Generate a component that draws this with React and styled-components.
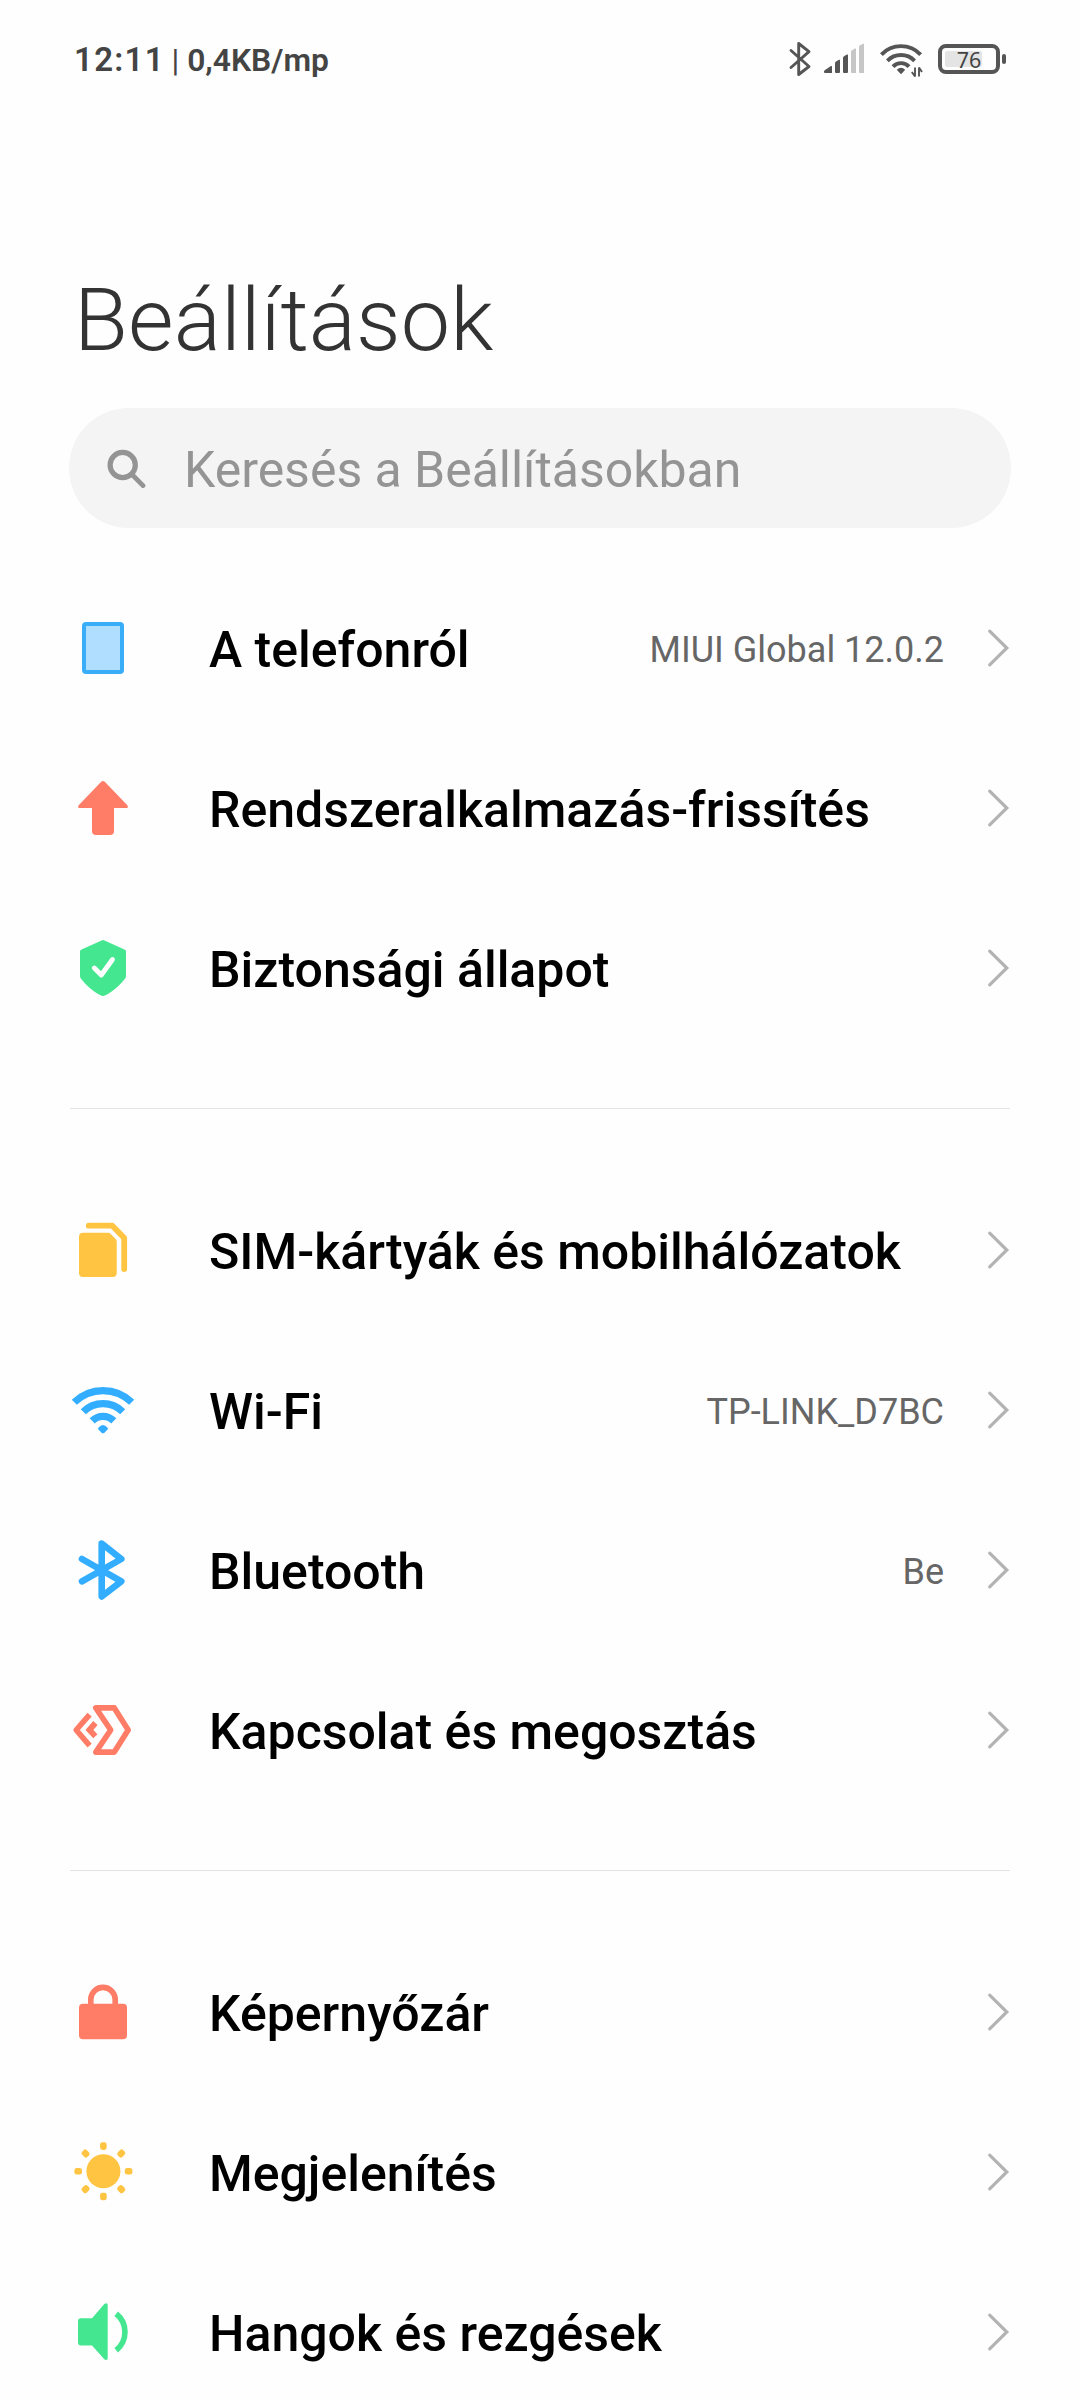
import React from "react";
import styled, { createGlobalStyle } from "styled-components";

const GlobalStyle = createGlobalStyle`
  * {
    box-sizing: border-box;
  }

  body {
    margin: 0;
    background: #fefefe;
    font-family: Roboto, "Noto Sans", sans-serif;
  }
`;

const Screen = styled.div`
  width: 1080px;
  height: 2400px;
  overflow: hidden;
  background: #fefefe;
`;

const StatusBar = styled.header`
  display: flex;
  justify-content: space-between;
  align-items: center;
  height: 118px;
  padding: 0 73px 0 74px;
`;

const StatusText = styled.div`
  display: flex;
  align-items: baseline;
  padding-top: 2px;
  color: #444;
  font-size: 31.8px;
  font-weight: 600;
  line-height: 38px;
  white-space: pre;
`;

const Clock = styled.span`
  font-size: 33px;
  letter-spacing: 1.3px;
`;

const Separator = styled.span`
  margin: 0 8px 0 6.5px;
  font-weight: 400;
`;

const StatusIcons = styled.div`
  display: flex;
  align-items: center;

  svg {
    display: block;
  }
`;

const Title = styled.h1`
  margin: 0;
  padding: 150px 0 0 74px;
  height: 290px;
  color: #333;
  font-size: 88px;
  font-weight: 300;
  line-height: 104px;
  letter-spacing: 0.1px;
`;

const SearchBar = styled.div`
  display: flex;
  align-items: center;
  width: 942px;
  height: 120px;
  margin: 0 0 40px 69px;
  padding-left: 37px;
  border-radius: 60px;
  background: #f4f4f4;
`;

const SearchText = styled.span`
  margin-left: 38px;
  padding-top: 3px;
  color: #949494;
  font-size: 50px;
  letter-spacing: -0.03px;
`;

const Group = styled.section`
  width: 940px;
  margin-left: 70px;

  & + & {
    margin-top: 60px;
    padding-top: 61px;
    border-top: 1px solid #e4e4e4;
  }
`;

const Row = styled.div`
  display: flex;
  align-items: center;
  height: 160px;
`;

const RowIcon = styled.svg`
  flex: none;
  width: 66px;
  height: 66px;
  margin-right: 73px;
`;

const Label = styled.span`
  flex: 1;
  padding-top: 3px;
  color: #000;
  font-size: 50px;
  font-weight: 500;
  white-space: nowrap;
`;

const Value = styled.span`
  margin-right: 43px;
  padding-top: 3px;
  color: #666;
  font-size: 36px;
  white-space: nowrap;
`;

const Chevron = () => (
  <svg width="23" height="40" viewBox="0 0 23 40" fill="none">
    <path d="M2.7 3.2 L19.8 20 L2.7 36.8" stroke="#b3b3b3" strokeWidth="3.2" strokeLinecap="round" />
  </svg>
);

const RED = "#ff7c66";
const BLUE = "#33adff";
const GREEN = "#45e690";
const YELLOW = "#ffc542";

const icons = {
  phone: (
    <rect x="14" y="9" width="38" height="48" rx="2" fill="#b0deff" stroke="#3aadf9" strokeWidth="4" />
  ),
  update: (
    <path
      d="M31.2 6.8 Q33 5.2 34.8 6.8 L57.3 30.2 Q59 33 56 33 H44 V56 Q44 60 40 60 H26 Q22 60 22 56 V33 H10 Q7 33 8.7 30.2 Z"
      fill={RED}
    />
  ),
  shield: (
    <>
      <path
        d="M31.5 5.6 Q33 4.6 34.5 5.6 L55 14.8 Q56 15.3 56 16.5 V41 Q56 42.5 55 43.7 C50 50 43 56.5 35.5 60.3 Q33 61.7 30.5 60.3 C23 56.5 16 50 11 43.7 Q10 42.5 10 41 V16.5 Q10 15.3 11 14.8 Z"
        fill={GREEN}
      />
      <path d="M24.3 33 L31.3 40 L42.5 24.5" fill="none" stroke="#fff" strokeWidth="4.8" strokeLinecap="round" strokeLinejoin="round" />
    </>
  ),
  sim: (
    <>
      <path d="M13 15.7 H38 Q39.5 15.7 40.5 16.7 L45.7 22 Q46.7 23 46.7 24.5 V56 Q46.7 60 42.7 60 H13 Q9 60 9 56 V19.7 Q9 15.7 13 15.7 Z" fill={YELLOW} />
      <path d="M18.8 8.7 H42.3 L54.2 21 V52.2" fill="none" stroke={YELLOW} strokeWidth="5.8" strokeLinecap="round" strokeLinejoin="round" />
    </>
  ),
  wifi: (
    <>
      <g fill="none" stroke={BLUE} strokeWidth="7.2">
        <path d="M4.3 25.3 A41 41 0 0 1 61.7 25.3" />
        <path d="M13.3 34.8 A28 28 0 0 1 52.7 34.8" />
        <path d="M22.2 43.9 A15.2 15.2 0 0 1 43.8 43.9" />
      </g>
      <path d="M28.4 50.8 Q33 45 37.6 50.8 Q38.4 51.6 37.6 52.6 L34.2 55.9 Q33 56.8 31.8 55.9 L28.4 52.6 Q27.6 51.6 28.4 50.8 Z" fill={BLUE} />
    </>
  ),
  bluetooth: (
    <path
      d="M12 22 L51.3 44.3 L31.7 59.5 V6.5 L51.3 22 L12 44.3"
      fill="none"
      stroke={BLUE}
      strokeWidth="6.6"
      strokeLinecap="round"
      strokeLinejoin="round"
    />
  ),
  share: (
    <g fill="none" stroke={RED} strokeWidth="5.6" strokeLinejoin="round">
      <path d="M25.8 10.9 H44.3 L58.2 33 L44.3 55.1 H25.8 L40.7 33 Z" />
      <path d="M19.6 17.6 L6.2 33 L19.6 48.6" />
      <path d="M25.4 26 L19.4 33 L25.4 39.2" strokeWidth="5.8" strokeLinejoin="miter" />
    </g>
  ),
  lock: (
    <>
      <rect x="9" y="24.8" width="48" height="35.5" rx="4" fill={RED} />
      <path d="M20.8 27 V20.6 A12.2 12.2 0 0 1 45.2 20.6 V27" fill="none" stroke={RED} strokeWidth="5.6" />
    </>
  ),
  sun: (
    <g fill={YELLOW}>
      <circle cx="33.4" cy="32.3" r="17" />
      {[0, 45, 90, 135, 180, 225, 270, 315].map((angle) => (
        <rect key={angle} x="30.1" y="3.3" width="6.6" height="7.6" rx="2.4" transform={`rotate(${angle} 33.4 32.3)`} />
      ))}
    </g>
  ),
  sound: (
    <>
      <path
        d="M11 19.3 H22 L34.3 5 Q35.2 4.2 36.2 4.2 Q37.7 4.2 37.7 6 V59.3 Q37.7 61 36.2 61 Q35.2 61 34.3 60.2 L22 46.5 H11 Q8 46.5 8 43.5 V22.3 Q8 19.3 11 19.3 Z"
        fill={GREEN}
      />
      <path d="M46.2 14.8 A23.3 23.3 0 0 1 46.2 51.2" fill="none" stroke={GREEN} strokeWidth="5.6" />
    </>
  ),
};

const groups = [
  [
    { icon: "phone", label: "A telefonról", value: "MIUI Global 12.0.2" },
    { icon: "update", label: "Rendszeralkalmazás-frissítés" },
    { icon: "shield", label: "Biztonsági állapot" },
  ],
  [
    { icon: "sim", label: "SIM-kártyák és mobilhálózatok" },
    { icon: "wifi", label: "Wi-Fi", value: "TP-LINK_D7BC" },
    { icon: "bluetooth", label: "Bluetooth", value: "Be" },
    { icon: "share", label: "Kapcsolat és megosztás" },
  ],
  [
    { icon: "lock", label: "Képernyőzár" },
    { icon: "sun", label: "Megjelenítés" },
    { icon: "sound", label: "Hangok és rezgések" },
  ],
];

const BatteryText = styled.text`
  font-family: "Noto Sans", sans-serif;
  font-size: 21.5px;
  fill: #444;
`;

function StatusGlyphs() {
  return (
    <StatusIcons>
      {/* bluetooth, signal, wifi and battery share one 40px high strip */}
      <svg width="35" height="40" viewBox="787 39 35 40" fill="none">
        <path d="M791 50.5 L809 66.5 L798.7 74.5 V43.5 L809 51.7 L791 67.5" stroke="#555" strokeWidth="2.9" strokeLinecap="round" strokeLinejoin="round" />
      </svg>
      <svg width="56" height="40" viewBox="822 39 56 40">
        <g fill="#555">
          <path d="M824 71.5 Q824 70.5 825 70 L831 66 Q832 65.6 832 66.6 V73 H825 Q824 73 824 72 Z" />
          <path d="M835 63.3 Q835 62 836 61.4 L839 59.8 Q840 59.4 840 60.4 V72 Q840 73 839 73 H836 Q835 73 835 72 Z" />
          <path d="M843 58 Q843 56.8 844 56.2 L847 54.6 Q848 54.2 848 55.2 V72 Q848 73 847 73 H844 Q843 73 843 72 Z" />
        </g>
        <g fill="#c6c6c6">
          <path d="M851 52 Q851 50.8 852 50.2 L855 48.6 Q856 48.2 856 49.2 V73 H852 Q851 73 851 72 Z" />
          <path d="M859 47 Q859 45.8 860 45.2 L863 43.8 Q864 43.4 864 44.4 V73 H860 Q859 73 859 72 Z" />
        </g>
      </svg>
      <svg width="58" height="40" viewBox="878 39 58 40">
        <g fill="none" stroke="#555" strokeWidth="3.9">
          <path d="M881.4 54.6 A27 27 0 0 1 920.6 54.6" />
          <path d="M887.4 60.8 A19 19 0 0 1 914.6 60.8" />
          <path d="M893 66.6 A11 11 0 0 1 909 66.6" />
        </g>
        <path d="M896.8 69.8 Q901 65.9 905.2 69.8 L901.8 73.6 Q901 74.4 900.2 73.6 Z" fill="#555" />
        <path d="M915 67.6 V76.4 L911.8 72 M919 76.4 V67.6 L922 72" fill="none" stroke="#555" strokeWidth="1.9" strokeLinejoin="bevel" />
      </svg>
      <svg width="71" height="40" viewBox="936 39 71 40">
        <rect x="940" y="46" width="58" height="26" rx="6" fill="#fefefe" stroke="#555" strokeWidth="4" />
        <rect x="945" y="51" width="37" height="16" rx="2" fill="#e4e4e4" />
        <rect x="1002" y="54" width="4" height="10" rx="2" fill="#555" />
        <BatteryText x="969" y="67.5" textAnchor="middle">76</BatteryText>
      </svg>
    </StatusIcons>
  );
}

function App() {
  return (
    <Screen>
      <GlobalStyle />
      <StatusBar>
        <StatusText>
          <Clock>12:11</Clock>
          <Separator>|</Separator>
          <span>0,4KB/mp</span>
        </StatusText>
        <StatusGlyphs />
      </StatusBar>
      <Title>Beállítások</Title>
      <SearchBar>
        <svg width="40" height="40" viewBox="0 0 40 40" fill="none" stroke="#949494" strokeLinecap="round">
          <circle cx="16.7" cy="17" r="12.6" strokeWidth="5.2" />
          <path d="M26 26.5 L37 37.6" strokeWidth="4.8" />
        </svg>
        <SearchText>Keresés a Beállításokban</SearchText>
      </SearchBar>
      {groups.map((rows) => (
        <Group key={rows[0].icon}>
          {rows.map(({ icon, label, value }) => (
            <Row key={icon}>
              <RowIcon viewBox="0 0 66 66">{icons[icon]}</RowIcon>
              <Label>{label}</Label>
              {value && <Value>{value}</Value>}
              <Chevron />
            </Row>
          ))}
        </Group>
      ))}
    </Screen>
  );
}

export default App;
